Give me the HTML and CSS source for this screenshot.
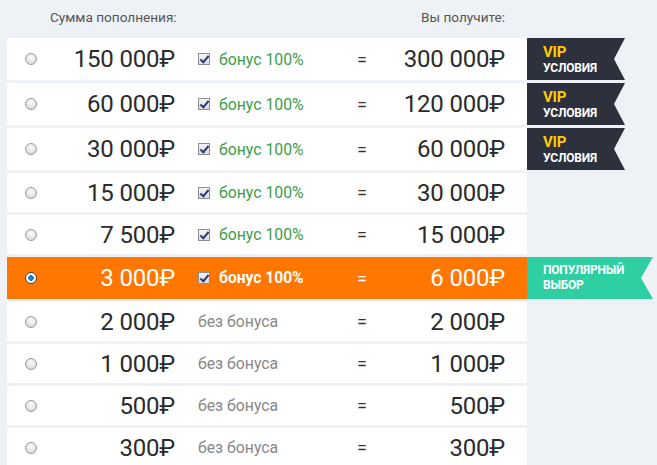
FILE: index.html
```html
<!DOCTYPE html>
<html lang="ru">
<head>
<meta charset="utf-8">
<link rel="stylesheet" href="styles.css">
</head>
<body>
<div class="page">
  <div class="head">
    <div class="h-sum">Сумма пополнения:</div>
    <div class="h-get">Вы получите:</div>
  </div>
  <div class="list">
    <div class="line">
      <div class="row"><span class="radio"></span><span class="amt">150 000₽</span><span class="bonus"><span class="cb"></span>бонус 100%</span><span class="eq">=</span><span class="amt">300 000₽</span></div>
      <div class="badge vip"><span class="y">VIP</span><span>УСЛОВИЯ</span></div>
    </div>
    <div class="line">
      <div class="row"><span class="radio"></span><span class="amt">60 000₽</span><span class="bonus"><span class="cb"></span>бонус 100%</span><span class="eq">=</span><span class="amt">120 000₽</span></div>
      <div class="badge vip"><span class="y">VIP</span><span>УСЛОВИЯ</span></div>
    </div>
    <div class="line">
      <div class="row"><span class="radio"></span><span class="amt">30 000₽</span><span class="bonus"><span class="cb"></span>бонус 100%</span><span class="eq">=</span><span class="amt">60 000₽</span></div>
      <div class="badge vip"><span class="y">VIP</span><span>УСЛОВИЯ</span></div>
    </div>
    <div class="line">
      <div class="row"><span class="radio"></span><span class="amt">15 000₽</span><span class="bonus"><span class="cb"></span>бонус 100%</span><span class="eq">=</span><span class="amt">30 000₽</span></div>
    </div>
    <div class="line">
      <div class="row"><span class="radio"></span><span class="amt">7 500₽</span><span class="bonus"><span class="cb"></span>бонус 100%</span><span class="eq">=</span><span class="amt">15 000₽</span></div>
    </div>
    <div class="line">
      <div class="row active"><span class="radio on"></span><span class="amt">3 000₽</span><span class="bonus"><span class="cb"></span>бонус 100%</span><span class="eq">=</span><span class="amt">6 000₽</span></div>
      <div class="badge pop"><span>ПОПУЛЯРНЫЙ</span><span>ВЫБОР</span></div>
    </div>
    <div class="line">
      <div class="row"><span class="radio"></span><span class="amt">2 000₽</span><span class="bonus none">без бонуса</span><span class="eq">=</span><span class="amt">2 000₽</span></div>
    </div>
    <div class="line">
      <div class="row"><span class="radio"></span><span class="amt">1 000₽</span><span class="bonus none">без бонуса</span><span class="eq">=</span><span class="amt">1 000₽</span></div>
    </div>
    <div class="line">
      <div class="row"><span class="radio"></span><span class="amt">500₽</span><span class="bonus none">без бонуса</span><span class="eq">=</span><span class="amt">500₽</span></div>
    </div>
    <div class="line">
      <div class="row"><span class="radio"></span><span class="amt">300₽</span><span class="bonus none">без бонуса</span><span class="eq">=</span><span class="amt">300₽</span></div>
    </div>
  </div>
</div>
</body>
</html>
```
FILE: styles.css
```css
* { box-sizing: border-box; }
html, body { margin: 0; padding: 0; }
body {
  background: #eef1f5;
  font-family: Roboto, "Liberation Sans", sans-serif;
  color: #333;
  width: 657px;
  height: 465px;
  overflow: hidden;
}
.page { padding-left: 7px; }
.head {
  height: 38px;
  display: grid;
  grid-template-columns: 168px 330px;
  align-items: center;
  font-size: 13.6px;
  color: #555;
  padding-bottom: 4px;
  white-space: nowrap;
}
.h-sum { justify-self: start; padding-left: 43px; }
.h-get { text-align: right; }
.list { display: flex; flex-direction: column; gap: 3px; }
.line { display: flex; }
.row {
  width: 520px;
  min-height: 39px;
  background: #fff;
  display: grid;
  grid-template-columns: 48px 120px 170px 34px 126px;
  align-items: center;
  padding-right: 22px;
  white-space: nowrap;
}
.radio {
  justify-self: center;
  width: 12px; height: 12px;
  border-radius: 50%;
  border: 1px solid #9a9a9a;
  background: radial-gradient(circle at 50% 35%, #fdfdfd 0%, #e2e2e2 60%, #cfcfcf 100%);
}
.radio.on {
  border-color: #3a4a5c;
  background: radial-gradient(circle at 50% 50%, #2a8fd6 0%, #1d6fae 38%, #fff 42%, #f0f0f0 100%);
}
.amt {
  text-align: right;
  font-size: 24px;
  font-weight: 400;
  color: #2b2b2b;
  letter-spacing: -0.2px;
}
.bonus {
  padding-left: 23px;
  font-size: 15.8px;
  color: #3d9e4a;
  display: flex;
  align-items: center;
}
.bonus.none { color: #888; }
.cb {
  width: 12px; height: 12px;
  border: 1px solid #8e8e8e;
  background: linear-gradient(#f4f4f4, #dcdcdc);
  margin-right: 9px;
  position: relative;
  flex: none;
}
.cb::after {
  content: "";
  position: absolute;
  left: 3px; top: 0px;
  width: 3px; height: 7px;
  border: solid #2c3a78;
  border-width: 0 2px 2px 0;
  transform: rotate(40deg);
}
.eq { text-align: center; font-size: 18px; color: #333; }
.row.active { background: #ff7600; }
.row.active .amt, .row.active .eq { color: #fff; }
.row.active .bonus { color: #fff; font-weight: 700; font-size: 15.6px; }
.badge {
  display: flex;
  flex-direction: column;
  justify-content: center;
  padding-left: 16px;
  height: 42px;
  color: #fff;
  font-weight: 700;
  font-size: 12px;
  letter-spacing: -0.2px;
  white-space: nowrap;
}
.vip {
  width: 98px;
  background: #2d303d;
  clip-path: polygon(0 0, 100% 0, 87px 50%, 100% 100%, 0 100%);
  line-height: 16px;
  padding-top: 1px;
}
.vip .y { color: #ffcc00; font-size: 15px; }
.pop {
  width: 126px;
  background: #2ecfa2;
  clip-path: polygon(0 0, 100% 0, 114px 50%, 100% 100%, 0 100%);
  line-height: 15px;
}
```
